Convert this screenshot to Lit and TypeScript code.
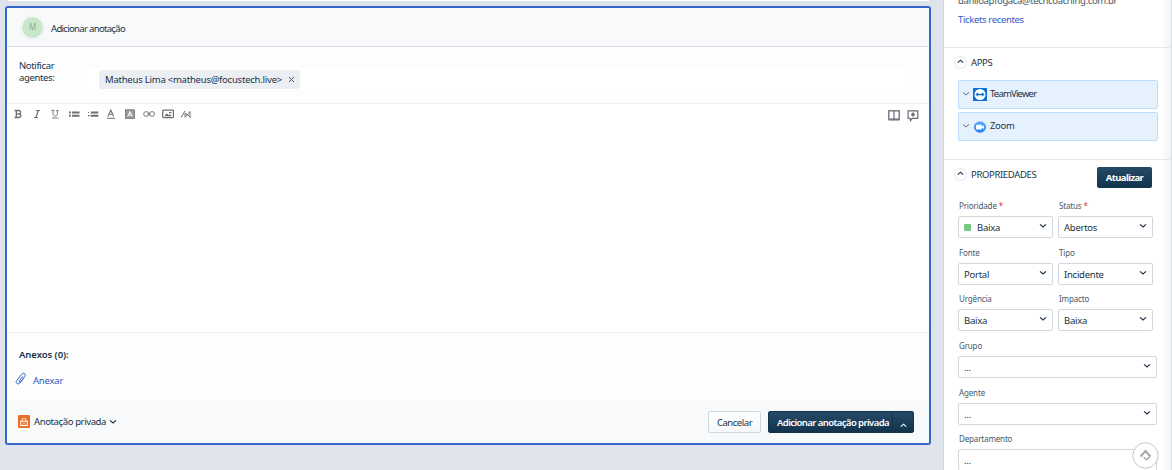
import { LitElement, html, css, svg, nothing } from 'lit';
import { customElement, property } from 'lit/decorators.js';

const chevronDown = html`<svg width="8" height="6" viewBox="0 0 8 6" fill="none" stroke="currentColor" stroke-width="1.2"><path d="M1 1.4l3 2.6 3-2.6"/></svg>`;

const chevronUp = html`<svg width="7" height="5" viewBox="0 0 7 5" fill="none" stroke="currentColor" stroke-width="1.1"><path d="M.8 3.6l2.7-2.4 2.7 2.4"/></svg>`;

const clipIcon = html`<svg width="12" height="13" viewBox="0 0 12 13" fill="none" stroke="#2c5cc5" stroke-width="1"><path d="M7.7 4.3L4.4 8.7c-.8 1 .6 2 1.4 1l4-5.3c1.6-2.3-1.3-4.4-3-2.2L1.8 8.400c-2 2.700 1.300 4.800 3.200 2.400l4-5"/></svg>`;

const lockIcon = html`<svg width="12" height="13" viewBox="0 0 12 13"><rect width="12" height="13" rx="1" fill="#ec6f27"/><g fill="none" stroke="#fff"><path d="M4 6V4.8c0-2 4-2 4 0V6"/><rect x="2.7" y="6.3" width="6.6" height="4.2"/><path d="M6 7.5v2"/></g></svg>`;

const closeIcon = html`<svg width="7" height="7" viewBox="0 0 7 7" stroke="#475867" stroke-width="1"><path d="M1 1l5 5M6 1L1 6"/></svg>`;

const teamViewerIcon = html`<svg width="14" height="13" viewBox="0 0 14 13"><rect width="14" height="13" rx=".6" fill="#0d6fd0"/><circle cx="7" cy="6.5" r="5.5" fill="#fff"/><path d="M2.3 6.5l2.9-2.2-.4 1.5h4.400l-.4-1.500 2.900 2.200-2.900 2.200.4-1.500H4.800l.4 1.500z" fill="#0d6fd0"/></svg>`;

const zoomIcon = html`<svg width="14" height="12" viewBox="0 0 14 12"><defs><linearGradient id="sky" x2="0" y2="1"><stop stop-color="#62aef9"/><stop offset="1" stop-color="#2580f5"/></linearGradient></defs><ellipse cx="7" cy="6" rx="6.1" ry="5.7" fill="url(#sky)"/><rect x="3" y="3.700" width="6" height="4.800" rx="1.200" fill="#fff"/><path d="M9 5.600l2-1.300v3.600L9 6.600z" fill="#fff"/></svg>`;

// 12x10 glyphs of the editor toolbar
const tools = [
  svg`<path d="M2.500 1.500h3.800c3 0 2.800 3.300.4 3.400 3 .1 2.900 3.600-.2 3.600h-4M4.300 1.500v7M4.300 4.900h2.500" stroke-width="1.300"/>`,
  svg`<path d="M5 1.500h4M3 8.500h4M7.300 1.500l-2.400 7" stroke-width="1.200"/>`,
  svg`<path d="M2.500 1.500h3M7 1.500h2.500M4 1.500v3.800c0 2.300 4.300 2.300 4.300 0V1.500M3 9h6.500" stroke-width=".9"/>`,
  svg`<path d="M1 3.500h1.800M1 6.700h1.800M4 3.500h7.500M4 6.700h7.500" stroke-width="2"/>`,
  svg`<path d="M1 3.500h1M1 6.700h1.800" stroke-width="1.200"/><path d="M3.800 3.500h7.500M3.800 6.700h7.500" stroke-width="2"/>`,
  svg`<path d="M3 7.500L5.800 1l2.800 6.500M4 5.200h3.700M2 9.200h8" stroke-width="1.100"/>`,
  svg`<rect x="1.500" y=".8" width="9" height="8.600" fill="#999" stroke-width=".8"/><path d="M3.800 7.500L6 2.500l2.200 5M4.500 6h3" stroke="#fff" stroke-width="1"/>`,
  svg`<rect x=".7" y="2.700" width="5" height="4.600" rx="2.200"/><rect x="6.500" y="2.700" width="5" height="4.600" rx="2.200"/><path d="M4.500 5h3"/>`,
  svg`<rect x=".7" y="1.200" width="10.800" height="7.500" rx="1" stroke-width="1.300"/><path d="M2.500 7.200l2-3 2 2 1.300-1 2 2z" fill="#666" stroke="none"/><path d="M7 3.600h2.500" stroke-width="1.100"/>`,
  svg`<path d="M1 8.500L5 2M5 8.500V4.200L10.500 8M5.500 8l4.500-5.500V8.500" stroke-width="1"/>`,
];

const bookIcon = html`<svg width="12" height="11" viewBox="0 0 12 11" fill="none" stroke="#666b75"><rect x=".8" y=".8" width="10.4" height="8.3" stroke-width="1.3"/><path d="M6 1v8.500M.5 10h11" stroke-width="1.2"/></svg>`;

const noteIcon = html`<svg width="12" height="12" viewBox="0 0 12 12" fill="none" stroke="#666b75"><path d="M1.100.8h9.700v7.600H5.200L3.500 10.600 3 8.400H1.100z" stroke-width="1.2"/><path d="M6 2.600v4M4.100 4.600h3.800" stroke-width="1.7"/></svg>`;

@customElement('select-field')
export class SelectField extends LitElement {
  static styles = css`
    :host {
      display: block;
      height: 46.67px;
    }
    .label {
      height: 15px;
      padding-left: 1px;
      color: #475867;
      font-size: 8px;
      letter-spacing: -0.15px;
      line-height: 10px;
      box-sizing: border-box;
      white-space: nowrap;
    }
    .required {
      color: #e43538;
    }
    .box {
      display: flex;
      align-items: center;
      box-sizing: border-box;
      height: 22px;
      padding: 0 5px;
      border: 1px solid #cfd7df;
      border-radius: 2px;
      background: #fff;
      color: #183247;
      letter-spacing: -0.25px;
    }
    .swatch {
      width: 7px;
      height: 7px;
      margin-right: 6px;
      border-radius: 1px;
      background: #76c77f;
    }
    .value {
      flex: 1;
      padding-top: 1px;
    }
    svg {
      margin-top: -2px;
    }
  `;

  @property() label = '';
  @property() value = '';
  @property({ type: Boolean }) required = false;
  @property({ type: Boolean }) swatch = false;

  render() {
    return html`
      <div class="label">${this.label}${this.required ? html` <span class="required">*</span>` : nothing}</div>
      <div class="box">
        ${this.swatch ? html`<span class="swatch"></span>` : nothing}
        <span class="value">${this.value}</span>
        ${chevronDown}
      </div>
    `;
  }
}

@customElement('note-editor')
export class NoteEditor extends LitElement {
  static styles = css`
    :host {
      display: flex;
      flex-direction: column;
      box-sizing: border-box;
      width: 926px;
      height: 439px;
      border: 2px solid #3766c8;
      border-radius: 3px;
      background: #fff;
      overflow: hidden;
    }
    .header {
      display: flex;
      align-items: center;
      box-sizing: border-box;
      height: 39px;
      padding-left: 14px;
      border-bottom: 1px solid #d9dde3;
      background: #f7f9fb;
    }
    .avatar {
      width: 21px;
      height: 21px;
      border: 1px solid #fff;
      outline: 1px solid #edf0f2;
      border-radius: 50%;
      background: #c8e6c9;
      color: #8fae92;
      font-size: 8px;
      line-height: 20px;
      text-align: center;
    }
    .title {
      padding: 3px 0 0 7px;
      letter-spacing: -0.67px;
    }
    .notify {
      display: flex;
      box-sizing: border-box;
      height: 57px;
      padding: 13px 19px 0 12px;
      border-bottom: 1px solid #efefef;
      background: #fdfdfd;
    }
    .notify-label {
      width: 63px;
      line-height: 12px;
    }
    .recipients {
      flex: 1;
      height: 22px;
      margin-top: 8px;
      padding: 2px 0 0 17px;
      border-radius: 2px;
      background: #fff;
      box-sizing: border-box;
    }
    .chip {
      display: flex;
      align-items: center;
      justify-content: space-between;
      box-sizing: border-box;
      width: 201px;
      height: 19px;
      padding: 0 5px 0 6px;
      border-radius: 2px;
      background: #ebeff3;
      letter-spacing: -0.22px;
      white-space: nowrap;
    }
    .chip svg {
      flex: none;
    }
    .toolbar {
      display: flex;
      align-items: center;
      height: 22px;
      padding: 0 10px 0 5px;
    }
    .tools {
      display: flex;
      flex: 1;
      gap: 6.7px;
      padding-bottom: 2px;
    }
    .side-tools {
      display: flex;
      gap: 7px;
      padding-top: 2px;
    }
    .area {
      flex: 1;
    }
    .attachments {
      box-sizing: border-box;
      height: 69px;
      padding: 16px 0 0 12px;
      border-top: 1px solid #ededed;
      background: #fdfdfd;
    }
    .attachments-title {
      font-weight: 600;
      letter-spacing: -0.05px;
      line-height: 12px;
    }
    .attach {
      display: flex;
      gap: 6px;
      margin: 11px 0 0 -4px;
      color: #2c5cc5;
      letter-spacing: -0.2px;
    }
    .attach-text {
      padding-top: 3px;
      line-height: 12px;
    }
    .footer {
      display: flex;
      align-items: center;
      box-sizing: border-box;
      height: 42px;
      padding: 0 15px 0 11px;
      background: #f7f9fb;
    }
    .kind {
      display: flex;
      flex: 1;
      align-items: center;
      gap: 4px;
      padding-bottom: 1px;
      letter-spacing: -0.38px;
    }
    .kind svg + svg,
    .kind-text + svg {
      margin: 1px 0 0 -1px;
    }
    .cancel {
      box-sizing: border-box;
      width: 53px;
      height: 22px;
      margin-right: 7px;
      border: 1px solid #cfd7df;
      border-radius: 2px;
      background: linear-gradient(#fff, #f5f7f9);
      letter-spacing: -0.45px;
      line-height: 21px;
      text-align: center;
    }
    .submit {
      display: flex;
      box-sizing: border-box;
      width: 146px;
      height: 22px;
      border: 1px solid #12344d;
      border-radius: 2px;
      background: linear-gradient(#264966, #12344d);
      color: #fff;
      font-weight: 600;
      letter-spacing: -0.58px;
      line-height: 21px;
      white-space: nowrap;
    }
    .submit-text {
      width: 124px;
      border-right: 1px solid #12344d;
      box-sizing: border-box;
      padding-left: 8px;
    }
    .submit-more {
      display: flex;
      flex: 1;
      align-items: center;
      justify-content: center;
      padding-top: 7px;
    }
  `;

  render() {
    return html`
      <div class="header">
        <div class="avatar">M</div>
        <div class="title">Adicionar anotação</div>
      </div>
      <div class="notify">
        <div class="notify-label">Notificar agentes:</div>
        <div class="recipients">
          <div class="chip">
            <span>Matheus Lima &lt;matheus@focustech.live&gt;</span>
            ${closeIcon}
          </div>
        </div>
      </div>
      <div class="toolbar">
        <div class="tools">
          ${tools.map((glyph) => html`<svg width="12" height="10" viewBox="0 0 12 10" fill="none" stroke="#707070">${glyph}</svg>`)}
        </div>
        <div class="side-tools">${bookIcon}${noteIcon}</div>
      </div>
      <div class="area"></div>
      <div class="attachments">
        <div class="attachments-title">Anexos (0):</div>
        <div class="attach">${clipIcon}<span class="attach-text">Anexar</span></div>
      </div>
      <div class="footer">
        <div class="kind">${lockIcon}<span class="kind-text">Anotação privada</span>${chevronDown}</div>
        <div class="cancel">Cancelar</div>
        <div class="submit">
          <span class="submit-text">Adicionar anotação privada</span>
          <span class="submit-more">${chevronUp}</span>
        </div>
      </div>
    `;
  }
}

@customElement('app-root')
export class AppRoot extends LitElement {
  static styles = css`
    :host {
      display: flex;
      justify-content: space-between;
      position: relative;
      height: 470px;
      overflow: hidden;
      background: #dfe4ec;
      color: #183247;
      font-family: 'Noto Sans', 'Open Sans', sans-serif;
      font-size: 9.5px;
      letter-spacing: -0.35px;
      line-height: 13px;
    }
    .main {
      padding-left: 5px;
    }
    .previous {
      height: 1px;
      margin: 0 2px 5px 3px;
      background: #fff;
    }
    .sidebar {
      box-sizing: border-box;
      width: 229px;
      border-left: 1px solid #cfd7df;
      border-right: 1px solid #dcdfe3;
      background: linear-gradient(to left, #f3f3f3, #fff 10px);
    }
    .contact {
      display: flex;
      flex-direction: column;
      box-sizing: border-box;
      height: 48px;
      padding-left: 14px;
      border-bottom: 1px solid #e6e8eb;
    }
    .email {
      height: 13px;
      margin-top: -6px;
      color: #475867;
    }
    .recent {
      margin-top: 6px;
      color: #2c5cc5;
    }
    .apps {
      box-sizing: border-box;
      height: 112px;
      padding: 8px 13px 0 14px;
      border-bottom: 1px solid #e6e8eb;
    }
    .heading {
      display: flex;
      align-items: center;
      height: 13px;
      margin-left: -4px;
      gap: 4px;
    }
    .toggle {
      display: flex;
      align-items: center;
      justify-content: center;
      box-sizing: border-box;
      width: 13px;
      height: 13px;
      border: 1px solid #e3e6ea;
      border-radius: 50%;
      padding-bottom: 2px;
    }
    .heading-text {
      flex: 1;
    }
    .app {
      display: flex;
      align-items: center;
      box-sizing: border-box;
      height: 29px;
      margin-top: 3px;
      padding: 0 3px;
      border: 1px solid #bbdcfe;
      border-radius: 2px;
      background: #e5f2fd;
    }
    .heading + .app {
      margin-top: 11px;
    }
    .app-icon {
      display: flex;
      margin: 0 3px;
    }
    .app svg {
      flex: none;
    }
    .app > svg {
      margin-bottom: 2px;
      color: #5a6b7a;
      stroke-width: 1;
    }
    .app-name {
      padding-bottom: 3px;
    }
    .teamviewer {
      letter-spacing: -0.8px;
    }
    .properties {
      padding: 7px 13px 0 14px;
    }
    .update {
      width: 55px;
      height: 21px;
      margin-right: 6px;
      border-radius: 2px;
      background: linear-gradient(#264966, #12344d);
      color: #fff;
      font-weight: 700;
      letter-spacing: -0.6px;
      line-height: 21px;
      text-align: center;
    }
    .properties .heading {
      align-items: flex-start;
      height: 21px;
    }
    .properties .toggle,
    .properties .heading-text {
      margin-top: 1px;
    }
    .fields {
      display: grid;
      grid-template-columns: 95px 95px;
      column-gap: 5px;
      margin-top: 13px;
    }
    .wide {
      grid-column: 1 / 3;
      width: 199px;
    }
    .to-top {
      position: absolute;
      right: 13px;
      bottom: 1px;
    }
  `;

  render() {
    return html`
      <div class="main">
        <div class="previous"></div>
        <note-editor></note-editor>
      </div>
      <div class="sidebar">
        <div class="contact">
          <div class="email">daniloapfogaca@techcoaching.com.br</div>
          <div class="recent">Tickets recentes</div>
        </div>
        <div class="apps">
          <div class="heading"><span class="toggle">${chevronUp}</span><span class="heading-text">APPS</span></div>
          <div class="app">${chevronDown}<span class="app-icon">${teamViewerIcon}</span><span class="app-name teamviewer">TeamViewer</span></div>
          <div class="app">${chevronDown}<span class="app-icon">${zoomIcon}</span><span class="app-name">Zoom</span></div>
        </div>
        <div class="properties">
          <div class="heading">
            <span class="toggle">${chevronUp}</span>
            <span class="heading-text">PROPRIEDADES</span>
            <span class="update">Atualizar</span>
          </div>
          <div class="fields">
            <select-field label="Prioridade" value="Baixa" required swatch></select-field>
            <select-field label="Status" value="Abertos" required></select-field>
            <select-field label="Fonte" value="Portal"></select-field>
            <select-field label="Tipo" value="Incidente"></select-field>
            <select-field label="Urgência" value="Baixa"></select-field>
            <select-field label="Impacto" value="Baixa"></select-field>
            <select-field class="wide" label="Grupo" value="..."></select-field>
            <select-field class="wide" label="Agente" value="..."></select-field>
            <select-field class="wide" label="Departamento" value="..."></select-field>
          </div>
        </div>
      </div>
      <svg class="to-top" width="27" height="27" viewBox="0 0 27 27" fill="none"><circle cx="13.5" cy="13.5" r="12.7" fill="#fff" fill-opacity=".85" stroke="#c4c6c9"/><path d="M8.500 14.500l5-5.500 5 5.500" stroke="#a5a7aa" stroke-width="2"/><path d="M11.500 15l3 2.800 3.500-3.300" stroke="#a5a7aa" stroke-width="1.2"/></svg>
    `;
  }
}
